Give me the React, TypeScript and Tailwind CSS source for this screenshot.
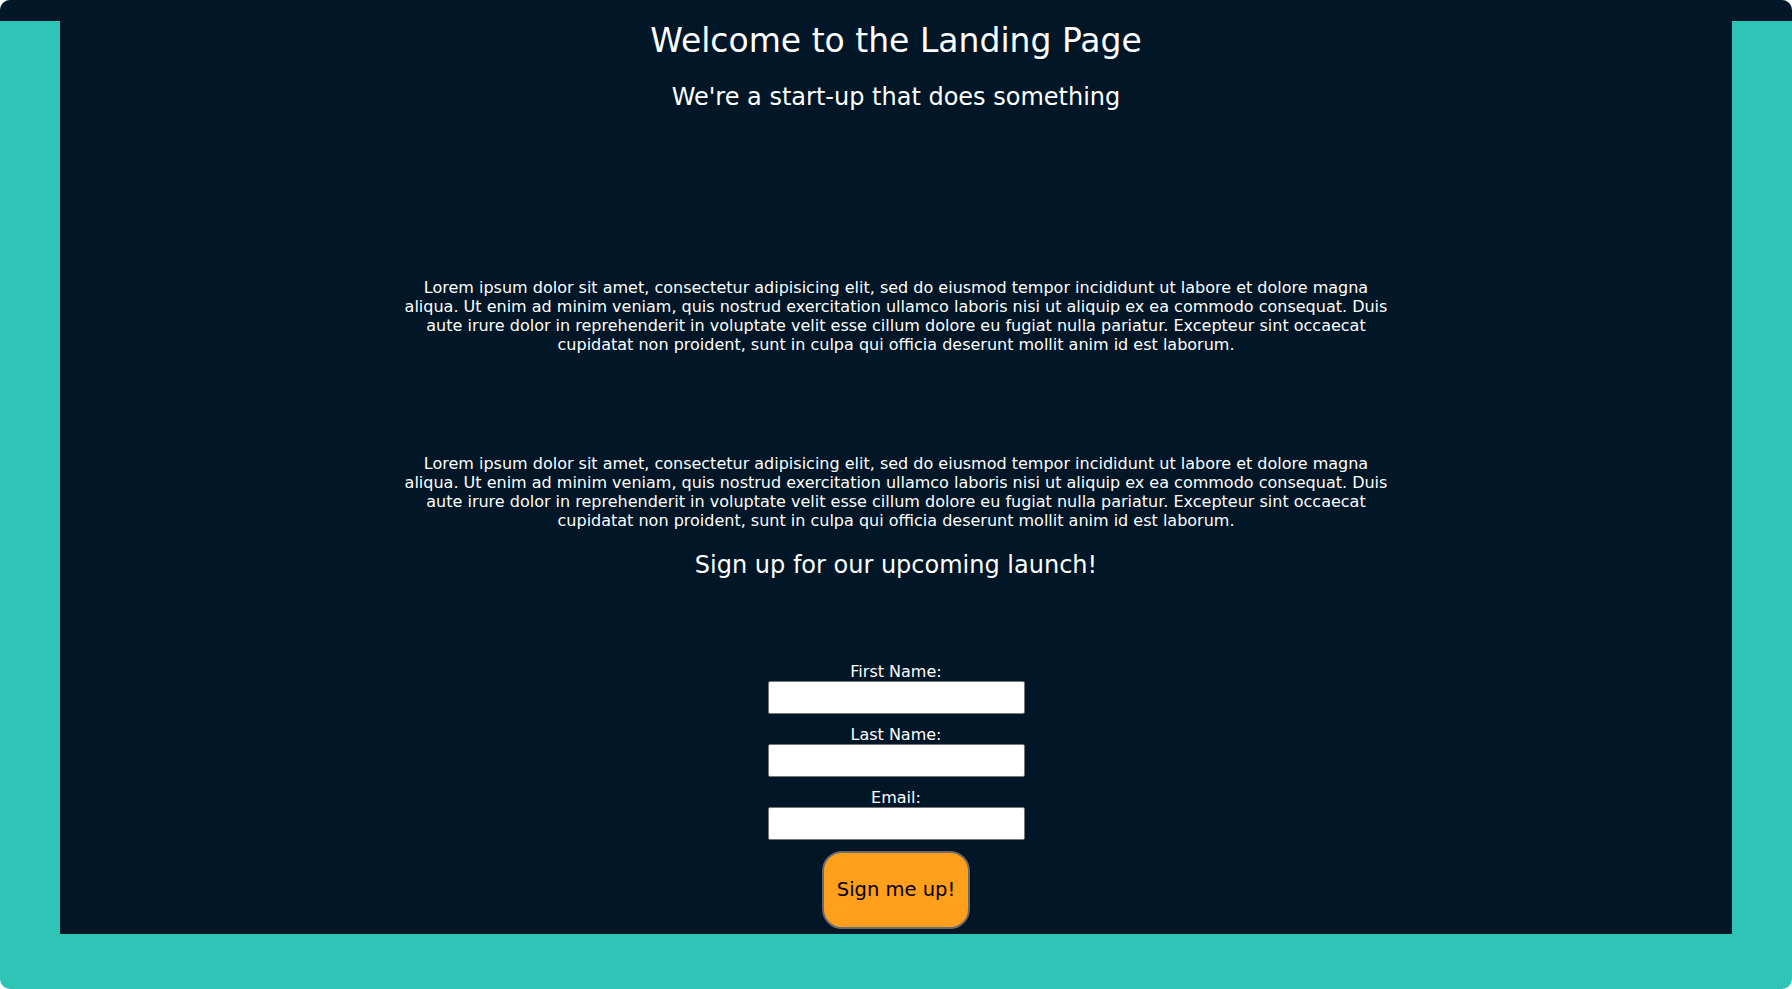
import React from "react";

const LINES = [
  "Lorem ipsum dolor sit amet, consectetur adipisicing elit, sed do eiusmod tempor incididunt ut labore et dolore magna",
  "aliqua. Ut enim ad minim veniam, quis nostrud exercitation ullamco laboris nisi ut aliquip ex ea commodo consequat. Duis",
  "aute irure dolor in reprehenderit in voluptate velit esse cillum dolore eu fugiat nulla pariatur. Excepteur sint occaecat",
  "cupidatat non proident, sunt in culpa qui officia deserunt mollit anim id est laborum.",
];

function Lorem({ className }: { className: string }) {
  return (
    <p className={"w-[1000px] text-center text-[16px] leading-[19px] text-white " + className}>
      {LINES.map((l, i) => (
        <span key={i} className="block whitespace-nowrap">
          {l}
        </span>
      ))}
    </p>
  );
}

function Field({ label, className }: { label: string; className: string }) {
  return (
    <div className={"flex flex-col items-center " + className}>
      <label className="text-[16px] leading-[19px] text-white">{label}</label>
      <input
        type="text"
        className="h-[33px] w-[257px] rounded-[2px] border border-[#767676] bg-white"
      />
    </div>
  );
}

export default function App() {
  return (
    <div
      className="flex h-[989px] w-[1792px] flex-col overflow-hidden rounded-[10px] bg-[#2ec4b6]"
      style={{ fontFamily: '"DejaVu Sans", sans-serif' }}
    >
      <div className="h-[21px] shrink-0 bg-[#011627]" />
      <main className="mx-[60px] flex h-[913px] shrink-0 flex-col items-center bg-[#011627]">
        <h1 className="text-[33px] leading-[40px] text-white">Welcome to the Landing Page</h1>
        <h2 className="mt-[22px] text-[24px] leading-[28px] text-white">
          We're a start-up that does something
        </h2>
        <Lorem className="mt-[167px]" />
        <Lorem className="mt-[100px]" />
        <h3 className="mt-[21px] text-[24px] leading-[28px] text-white">
          Sign up for our upcoming launch!
        </h3>
        <form className="flex flex-col items-center">
          <Field label="First Name:" className="mt-[83px]" />
          <Field label="Last Name:" className="mt-[11px]" />
          <Field label="Email:" className="mt-[11px]" />
          <button
            type="button"
            className="mt-[11px] h-[78px] w-[148px] rounded-[20px] border-2 border-[#6b6b6b] bg-[#ff9f1c] text-[19.5px] text-black shadow-[0_0_2px_rgba(0,0,0,0.6)]"
          >
            Sign me up!
          </button>
        </form>
      </main>
    </div>
  );
}
